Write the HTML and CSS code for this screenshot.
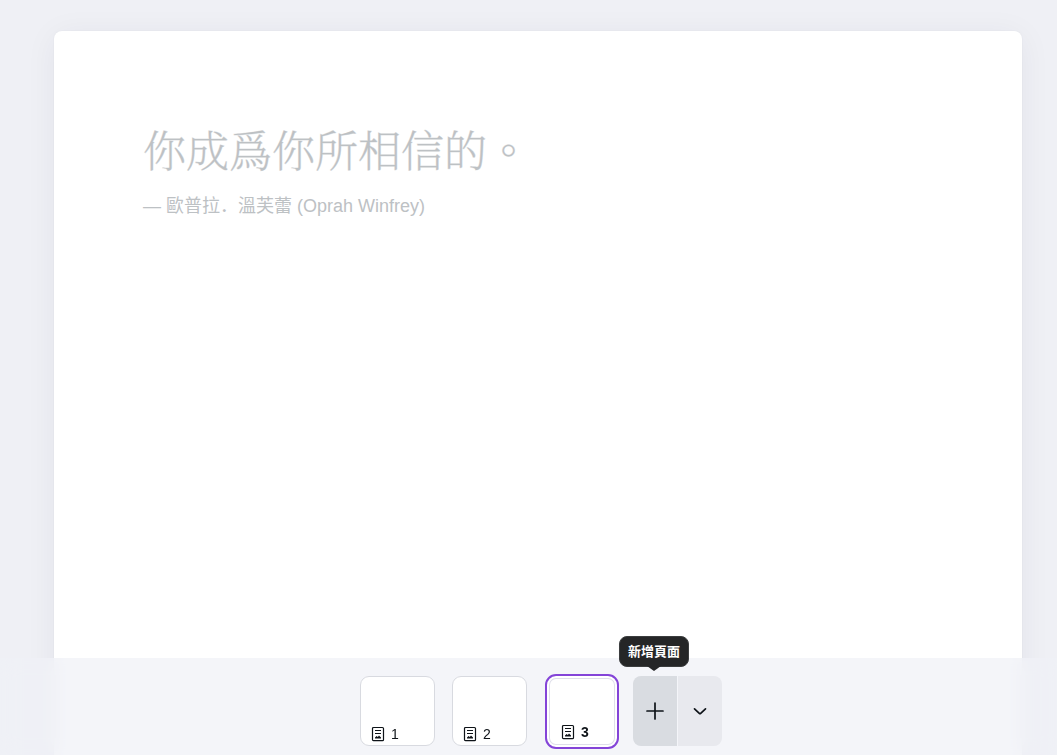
FILE: index.html
```html
<!DOCTYPE html>
<html lang="zh-Hant">

<head>
  <meta charset="UTF-8">
  <meta name="viewport" content="width=device-width, initial-scale=1.0">
  <title>文件</title>
  <link rel="stylesheet" href="styles.css">
</head>

<body>
  <!-- Shared icon: page with text lines and a picture -->
  <svg class="sprite" aria-hidden="true">
    <symbol id="icon-doc" viewBox="0 0 14 16">
      <rect x="1.5" y="1.5" width="11" height="13.2" rx="1" fill="none" stroke="currentColor" stroke-width="1.2" />
      <path d="M4 4.5h6M4 7.5h6" fill="none" stroke="currentColor" stroke-width="1" />
      <path d="M4 12.5v-1l1.6-1.4 1.2 1 1.2-1.6 2 2v1z" fill="currentColor" />
    </symbol>
  </svg>

  <main class="sheet">
    <h1 class="quote">你成爲你所相信的。</h1>
    <p class="author" lang="zh-Hans">— 歐普拉．溫芙蕾 (Oprah Winfrey)</p>
  </main>

  <!-- Page strip -->
  <nav class="page-bar">
    <button class="thumb" type="button">
      <svg class="doc-icon" aria-hidden="true"><use href="#icon-doc" /></svg>
      <span>1</span>
    </button>
    <button class="thumb" type="button">
      <svg class="doc-icon" aria-hidden="true"><use href="#icon-doc" /></svg>
      <span>2</span>
    </button>
    <button class="thumb active" type="button" aria-current="page">
      <svg class="doc-icon" aria-hidden="true"><use href="#icon-doc" /></svg>
      <span>3</span>
    </button>

    <div class="add-group">
      <button class="add" type="button" aria-labelledby="add-tip">
        <svg class="icon" viewBox="0 0 24 24" aria-hidden="true">
          <path d="M12 4v16M4 12h16" />
        </svg>
      </button>
      <button class="more" type="button" aria-label="更多">
        <svg class="icon" viewBox="0 0 24 24" aria-hidden="true">
          <path d="M6.5 9.8l4.8 4.6q.7.6 1.4 0l4.8-4.6" />
        </svg>
      </button>
      <div class="tooltip" id="add-tip" role="tooltip">新增頁面</div>
    </div>
  </nav>
</body>

</html>
```

FILE: styles.css
```css
* {
  box-sizing: border-box;
}

body {
  height: 100vh;
  margin: 0;
  padding: 31px 35px 0 54px;
  overflow: hidden;
  background: #eff0f5;
  font-family: "Liberation Sans", "Noto Sans CJK TC", sans-serif;
}

.sprite {
  position: absolute;
  width: 0;
  height: 0;
}

/* Document */
.sheet {
  min-height: 100vh;
  padding: 86px 89px;
  border-radius: 8px;
  background: #fff;
  box-shadow: 0 0 2px rgba(20, 30, 60, 0.05), 0 4px 32px rgba(20, 30, 60, 0.06);
  color: #bdc1c4;
}

.quote {
  margin: 0;
  font-family: "Noto Serif CJK TC", "Noto Sans CJK TC", serif;
  font-size: 43px;
  font-weight: 200;
  line-height: 64px;
  -webkit-text-stroke: 1px rgba(189, 193, 196, 0.4);
}

.author {
  margin: 13px 0 0;
  font-family: "Liberation Sans", "Noto Sans CJK SC", sans-serif;
  font-size: 18px;
  line-height: 24px;
}

/* Page strip, floats over the document */
.page-bar {
  position: fixed;
  right: 0;
  bottom: 0;
  left: 0;
  display: flex;
  justify-content: center;
  align-items: flex-start;
  gap: 17px;
  padding: 18px 0 9px 25px;
  background: rgba(240, 241, 246, 0.7);
  backdrop-filter: blur(10px);
}

.thumb {
  display: flex;
  align-items: flex-end;
  gap: 6px;
  width: 75px;
  height: 70px;
  padding: 0 10px 3px;
  border: 1px solid #d8dae0;
  border-radius: 9px;
  background: #fff;
  color: #0e1318;
  font-family: "Liberation Sans", sans-serif;
  font-size: 14px;
  line-height: 16px;
}

.thumb.active {
  width: 74px;
  height: 75px;
  margin: -2px 0 -3px 1px;
  padding: 0 14px 7px;
  border: 2px solid #8444d8;
  border-radius: 11px;
  box-shadow: inset 0 0 0 2px #fff, inset 0 0 0 3px #dfdfea;
  font-weight: 700;
}

.doc-icon {
  width: 14px;
  height: 16px;
}

.add-group {
  position: relative;
  display: flex;
  gap: 1px;
  height: 70px;
  margin-left: -3px;
}

.add,
.more {
  display: flex;
  align-items: center;
  justify-content: center;
  width: 44px;
  padding: 0;
  border: 0;
  background: #e8e9ee;
  color: #0e1318;
}

.add {
  border-radius: 8px 0 0 8px;
  background: #d9dce1;
}

.more {
  border-radius: 0 8px 8px 0;
}

.icon {
  width: 24px;
  height: 24px;
  fill: none;
  stroke: currentColor;
  stroke-width: 1.7;
  stroke-linecap: round;
}

.tooltip {
  position: absolute;
  bottom: 79px;
  left: 21px;
  padding: 5px 8px;
  border: 1px solid #3b3d3e;
  border-radius: 8px;
  background: #252627;
  color: #fff;
  font-size: 13px;
  font-weight: 700;
  line-height: 19px;
  white-space: nowrap;
  transform: translateX(-50%);
}

.tooltip::after {
  content: "";
  position: absolute;
  top: 100%;
  left: 50%;
  border: 7px solid transparent;
  border-top: 5px solid #252627;
  border-bottom: 0;
  transform: translateX(-50%);
}
```
